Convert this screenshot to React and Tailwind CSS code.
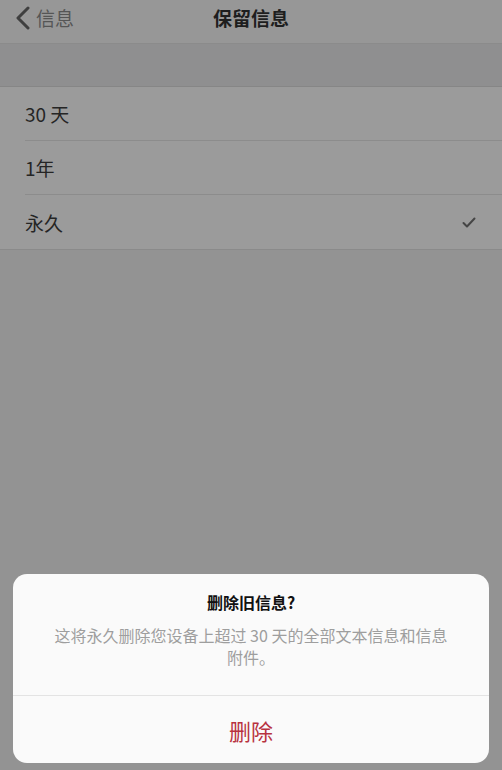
import React from 'react'

const font = { fontFamily: '"Noto Sans CJK SC", "Noto Sans", sans-serif' }

const options = [
    { label: '30 天', checked: false },
    { label: '1年', checked: false },
    { label: '永久', checked: true },
]

export default function App() {
    return (
        <div className='relative flex flex-col w-[502px] h-[770px] bg-[#939393] overflow-hidden' style={font}>
            {/* nav bar */}
            <div className='relative flex items-center h-[44px] pb-[8px] bg-[#979797] border-b border-[#8b8b8b]'>
                <div className='flex items-center pl-[14px] text-[#4a4a4a]'>
                    <svg width='18' height='24' viewBox='0 0 18 24' fill='none'>
                        <path d='M14 2 L4 12 L14 22' stroke='#3f3f3f' strokeWidth='3' strokeLinecap='round' strokeLinejoin='round' />
                    </svg>
                    <span className='ml-[4px] text-[19px] leading-none text-[#555]'>信息</span>
                </div>
                <div className='absolute inset-x-0 top-0 h-full pb-[8px] flex items-center justify-center pointer-events-none'>
                    <span className='text-[19px] font-bold text-[#1e1e1e] leading-none'>保留信息</span>
                </div>
            </div>

            {/* section header */}
            <div className='h-[43px] bg-[#8f8f90] border-b border-[#868686]'></div>

            {/* options */}
            <div className='bg-[#9b9b9b] border-b border-[#8a8a8a]'>
                {options.map((o, i) => (
                    <div key={o.label} className='pl-[25px]'>
                        <div className={`flex items-center justify-between h-[54px] pr-[26px] ${i < options.length - 1 ? 'border-b border-[#8c8c8c]' : ''}`}>
                            <span className='text-[19px] text-[#252525] leading-none'>{o.label}</span>
                            {o.checked && (
                                <svg width='14' height='11' viewBox='0 0 14 11' fill='none'>
                                    <path d='M1.5 6 L5 9.5 L12.5 1.5' stroke='#454545' strokeWidth='2' strokeLinecap='round' strokeLinejoin='round' />
                                </svg>
                            )}
                        </div>
                    </div>
                ))}
            </div>

            {/* alert sheet */}
            <div className='absolute left-[13px] right-[13px] bottom-[7px] bg-[#fafafa] rounded-[14px] overflow-hidden'>
                <div className='flex flex-col items-center h-[122px] pt-[17px] border-b border-[#e3e3e3]'>
                    <p className='text-[16px] font-bold text-[#111] leading-[22px]'>删除旧信息?</p>
                    <p className='mt-[11px] text-[16px] text-[#9e9e9e] leading-[22px] text-center'>
                        这将永久删除您设备上超过 30 天的全部文本信息和信息<br />附件。
                    </p>
                </div>
                <div className='flex items-center justify-center h-[67px]'>
                    <span className='text-[22px] text-[#b8323f] leading-none'>删除</span>
                </div>
            </div>
        </div>
    )
}
